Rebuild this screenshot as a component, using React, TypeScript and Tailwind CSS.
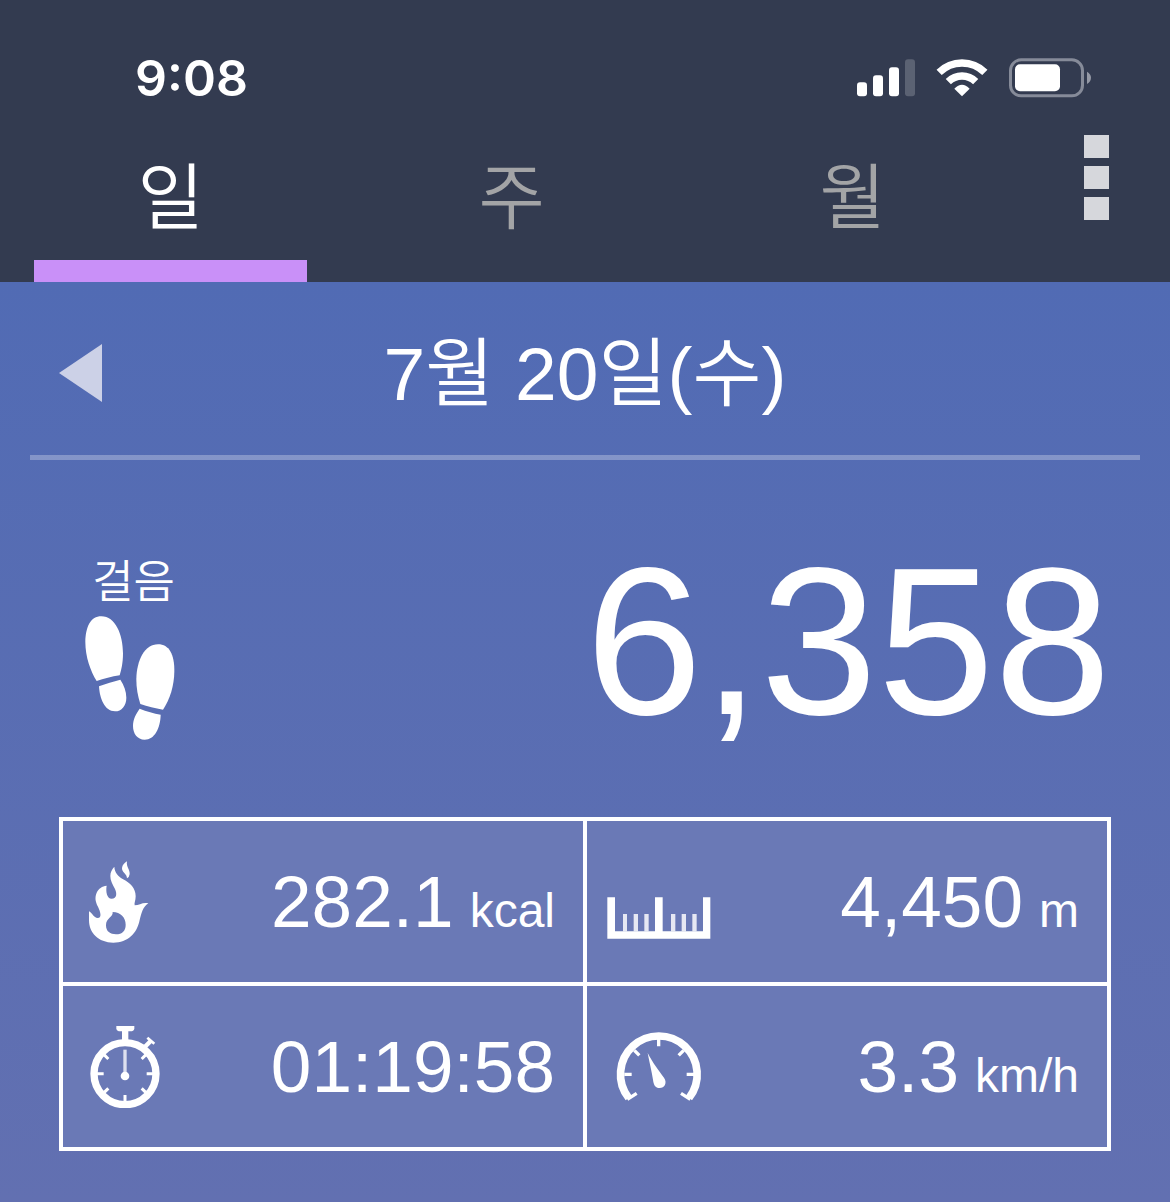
import type { ReactNode } from "react";

const tabs = [
  { label: "일", active: true },
  { label: "주", active: false },
  { label: "월", active: false },
];

type Stat = { name: string; value: string; unit?: string; icon: ReactNode };

const rows: Stat[][] = [
  [
    { name: "calories", value: "282.1", unit: "kcal", icon: <FlameIcon /> },
    { name: "distance", value: "4,450", unit: "m", icon: <RulerIcon /> },
  ],
  [
    { name: "time", value: "01:19:58", icon: <StopwatchIcon /> },
    { name: "speed", value: "3.3", unit: "km/h", icon: <GaugeIcon /> },
  ],
];

export default function App() {
  return (
    <div className="flex min-h-screen flex-col bg-[#333b50] font-['Liberation_Sans','Noto_Sans_CJK_KR',sans-serif] font-[350] text-white">
      <header>
        <StatusBar />
        <TabBar />
      </header>
      <main className="flex-1 bg-linear-to-b from-[#516bb4] to-[#6270b1] pb-12">
        <DateBar />
        <Steps />
        <StatTable />
      </main>
    </div>
  );
}

function StatusBar() {
  return (
    <div className="flex items-center justify-between pt-14 pr-[79px] pl-[135px]">
      <time className="font-['Inter',sans-serif] text-[50px] leading-11 font-semibold">9:08</time>
      <div className="flex items-center gap-[21px]">
        <SignalIcon />
        <WifiIcon />
        <BatteryIcon />
      </div>
    </div>
  );
}

function TabBar() {
  return (
    <nav className="flex h-[182px]">
      {tabs.map((tab) => (
        <a
          key={tab.label}
          href="#"
          aria-current={tab.active ? "page" : undefined}
          className={`flex flex-1 flex-col items-center text-[72px] leading-none ${
            tab.active ? "text-white" : "text-[#a3a4a6]"
          }`}
        >
          <span className="flex flex-1 items-center pt-9">{tab.label}</span>
          <span className={`h-[22px] w-4/5 ${tab.active ? "bg-[#c990f8]" : ""}`} />
        </a>
      ))}
      <button
        type="button"
        aria-label="menu"
        className="flex w-[147px] flex-col items-center gap-2 pt-[35px]"
      >
        <span className="h-[23px] w-[25px] bg-[#d6d7dc]" />
        <span className="h-[23px] w-[25px] bg-[#d6d7dc]" />
        <span className="h-[23px] w-[25px] bg-[#d6d7dc]" />
      </button>
    </nav>
  );
}

function DateBar() {
  return (
    <div className="mx-[30px] grid h-[178px] grid-cols-[1fr_auto_1fr] items-center border-b-5 border-white/28 px-[29px]">
      <button type="button" aria-label="previous day" className="justify-self-start pt-2">
        <svg width="43" height="58" viewBox="0 0 43 58" fill="#ccd1e7">
          <path d="M0 29 43 0V58Z" />
        </svg>
      </button>
      <h1 className="pt-3 text-[75px] leading-none">7월 20일(수)</h1>
    </div>
  );
}

function Steps() {
  return (
    <section className="flex items-start justify-between px-[59px] pt-[82px]">
      <div className="flex flex-col items-end gap-2 pt-4 pl-[26px]">
        <h2 className="text-[45px] leading-[50px]">걸음</h2>
        <FootprintsIcon />
      </div>
      <p className="text-[210px] leading-[200px]">6,358</p>
    </section>
  );
}

function StatTable() {
  return (
    <div className="px-[59px] pt-[75px]">
      <table className="w-full table-fixed border-collapse bg-[#6a79b6]">
        <tbody>
          {rows.map((row) => (
            <tr key={row[0].name}>
              {row.map((stat) => (
                <td
                  key={stat.name}
                  aria-label={stat.name}
                  className="h-[165px] border-4 border-white p-0 pr-7 pl-5 first:pl-[26px]"
                >
                  <div className="flex items-center justify-between">
                    {stat.icon}
                    <span className="flex items-baseline gap-4 text-[73px] leading-20">
                      {stat.value}
                      {stat.unit && <small className="text-5xl">{stat.unit}</small>}
                    </span>
                  </div>
                </td>
              ))}
            </tr>
          ))}
        </tbody>
      </table>
    </div>
  );
}

function SignalIcon() {
  return (
    <svg width="58" height="38" viewBox="48 56 174 114" fill="#fff" aria-hidden>
      <rect x="48" y="126" width="30" height="42" rx="9" />
      <rect x="96" y="105" width="30" height="63" rx="9" />
      <rect x="144" y="81" width="30" height="87" rx="9" />
      <rect x="192" y="57" width="30" height="111" rx="9" opacity=".2" />
    </svg>
  );
}

function WifiIcon() {
  return (
    <svg width="52" height="38" viewBox="287 56 156 114" fill="none" stroke="#fff" strokeWidth="22" aria-hidden>
      <path d="M296.400 96.400A97 97 0 0 1 433.600 96.400" />
      <path d="M324 124A58 58 0 0 1 406 124" />
      <path d="M365 168 342 145Q365 122 388 145Z" fill="#fff" stroke="none" />
    </svg>
  );
}

function BatteryIcon() {
  return (
    <svg width="82" height="40" viewBox="507 53 246 120" fill="#fff" aria-hidden>
      <rect x="511.500" y="58.500" width="216" height="108" rx="32" fill="none" stroke="#868b99" strokeWidth="9" />
      <rect x="525" y="72" width="135" height="81" rx="15" />
      <path d="M741 94Q753 101 753 112.500T741 131Z" fill="#9599a5" />
    </svg>
  );
}

function FootprintsIcon() {
  return (
    <svg width="90" height="124" viewBox="74 227 270 372" fill="#fff" aria-hidden>
      <path d="M109 422C91 393 75 350 75 305C76 259 91 228 123 228C165 228 188 282 188 339C188 368 183 389 178 405C154 409 130 415 109 422Z" />
      <path d="M116 438C137 429 159 424 180 418C191 435 198 453 198 472C198 496 184 513 164 513C133 513 118 475 116 438Z" />
      <path d="M240 491C232 466 228 443 228 416C229 360 253 312 293 312C327 312 342 343 342 391C342 436 328 478 308 508C284 504 262 499 240 491Z" />
      <path d="M238 505C259 513 280 519 301 523C300 563 283 598 253 598C231 598 218 580 218 557C218 537 227 520 238 505Z" />
    </svg>
  );
}

function FlameIcon() {
  return (
    <svg width="60" height="82" viewBox="87 58 180 246" fill="#fff" aria-hidden>
      <path d="M201 59C198 76 210 83 209 97Q208 107 201 110C201 96 185 92 186 79C187 69 194 64 201 59Z" />
      <path
        fillRule="evenodd"
        d="M163 75C164 93 174 103 188 112C211 124 227 139 227 164C227 177 222 185 224 191C238 191 248 181 265 185C248 197 245 213 239 235C231 275 204 303 160 303C115 303 87 273 87 236V209C97 214 101 229 113 229C127 228 121 210 114 195C106 180 104 167 110 153C116 140 126 134 140 132C137 148 140 171 155 171C171 171 171 155 165 142C157 127 151 116 151 103C151 91 156 83 163 75ZM158 211C160 226 138 229 138 251C138 270 151 278 168 278C187 278 197 267 197 249C197 228 182 211 158 211Z"
      />
    </svg>
  );
}

function StopwatchIcon() {
  return (
    <svg width="72" height="82" viewBox="87 47 216 246" fill="none" stroke="#fff" aria-hidden>
      <circle cx="195" cy="190" r="93" strokeWidth="22" />
      <path d="M186 62H205V92H186Z" fill="#fff" stroke="none" />
      <path d="M169 47H223V55Q221 63 211 63H181Q171 63 169 55Z" fill="#fff" stroke="none" />
      <path d="M255 109 273 91" strokeWidth="13" />
      <path d="M262 82 283 100" strokeWidth="8" />
      <path d="M195 118V188" strokeWidth="10" stroke="#dde0ef" />
      <circle cx="195" cy="197" r="13" fill="#fff" stroke="none" />
      <path
        d="M110 190H131M260 190H281M195 254V275M132 133 145 146M258 133 245 146M132 247 145 234M258 247 245 234"
        strokeWidth="9"
      />
    </svg>
  );
}

function RulerIcon() {
  return (
    <svg width="104" height="82" viewBox="80 -30 312 246" fill="#fff" aria-hidden>
      <path d="M81 79H104V181H224V79H247V181H368V79H390V203H81Z" />
      <path
        d="M128 129H140V183H128ZM160 129H173V183H160ZM192 129H205V183H192ZM272 129H285V183H272ZM304 129H317V183H304ZM336 129H349V183H336Z"
        fill="#e6e8f3"
      />
    </svg>
  );
}

function GaugeIcon() {
  return (
    <svg width="104" height="72" viewBox="48 64 312 216" fill="none" stroke="#fff" aria-hidden>
      <path d="M113 265A115 115 0 1 1 294 265" strokeWidth="23" />
      <path
        d="M203 85V110M100 194H122M287 194H309M130 122 145 137M278 122 263 137M109 269 137 251M298 269 270 251"
        strokeWidth="10"
      />
      <path d="M170 130C186 161 205 185 219 204C230 220 220 235 206 235C193 235 188 226 186 210C182 185 175 157 170 130Z" fill="#fff" stroke="none" />
    </svg>
  );
}
